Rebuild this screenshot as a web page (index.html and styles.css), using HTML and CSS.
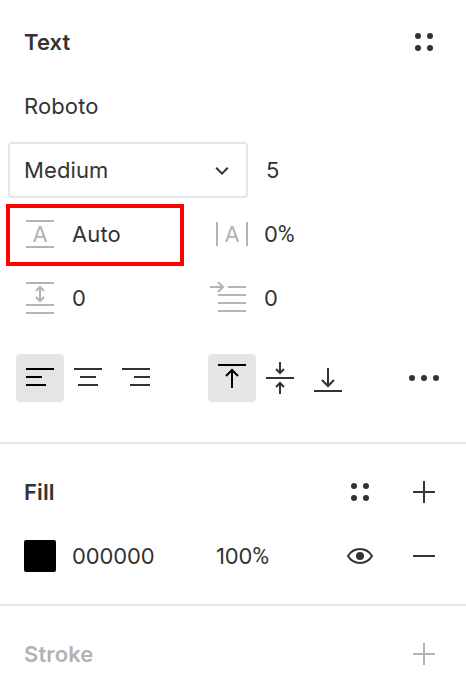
FILE: index.html
```html
<!DOCTYPE html>
<html lang="en">
<head>
    <meta charset="UTF-8">
    <meta name="viewport" content="width=device-width, initial-scale=1.0">
    <title>Text Properties Panel</title>
    <link rel="stylesheet" href="styles.css">
</head>
<body>
    <div class="panel">
        <section class="section">
            <div class="row">
                <h2 class="title">Text</h2>
                <svg class="icon push" viewBox="0 0 48 48"><g class="dots"><circle cx="18" cy="18" r="3"/><circle cx="30" cy="18" r="3"/><circle cx="18" cy="30" r="3"/><circle cx="30" cy="30" r="3"/></g></svg>
            </div>
            <div class="row">
                <span class="value">Roboto</span>
            </div>
            <div class="row">
                <div class="select">
                    <span>Medium</span>
                    <svg class="icon" viewBox="0 0 48 48"><path d="M18.2 21.8l5.8 5.8 5.8-5.8"/></svg>
                </div>
                <span class="font-size">5</span>
            </div>
            <div class="row">
                <div class="field field-highlight">
                    <svg class="icon muted" viewBox="0 0 48 48"><path d="M10 11h28M10 37h28"/><text x="24" y="32">A</text></svg>
                    <span>Auto</span>
                </div>
                <div class="field">
                    <svg class="icon muted" viewBox="0 0 48 48"><path d="M9 12v24M39 12v24"/><text x="24" y="32">A</text></svg>
                    <span class="num">0<span class="percent">%</span></span>
                </div>
            </div>
            <div class="row">
                <div class="field">
                    <svg class="icon muted" viewBox="0 0 48 48"><path d="M10 9h28M10 31h28M10 39h28M24 13v14M20 17l4-4 4 4M20 23l4 4 4-4"/></svg>
                    <span class="num">0</span>
                </div>
                <div class="field">
                    <svg class="icon muted" viewBox="0 0 48 48"><path d="M20 13h18M10 21h28M10 29h28M10 37h28M2 13h12.5M10 8l5 5-5 5"/></svg>
                    <span class="num">0</span>
                </div>
            </div>
            <div class="row row-align">
                <div class="group">
                    <button class="btn active" aria-label="Align left"><svg class="icon" viewBox="0 0 48 48"><path d="M10 15h28M10 23h16M10 31h20"/></svg></button>
                    <button class="btn" aria-label="Align center"><svg class="icon" viewBox="0 0 48 48"><path d="M10 15h28M16 23h16M14 31h20"/></svg></button>
                    <button class="btn" aria-label="Align right"><svg class="icon" viewBox="0 0 48 48"><path d="M10 15h28M22 23h16M18 31h20"/></svg></button>
                </div>
                <div class="group">
                    <button class="btn active" aria-label="Align top"><svg class="icon" viewBox="0 0 48 48"><path d="M10 11h28M24 34V16M18 22l6-6 6 6"/></svg></button>
                    <button class="btn" aria-label="Align middle"><svg class="icon" viewBox="0 0 48 48"><path d="M10 24h28M24 8v11M20 15l4 4 4-4M24 40V29M20 33l4-4 4 4"/></svg></button>
                    <button class="btn" aria-label="Align bottom"><svg class="icon" viewBox="0 0 48 48"><path d="M10 37h28M24 14v18M18 26l6 6 6-6"/></svg></button>
                </div>
                <button class="btn push" aria-label="More"><svg class="icon" viewBox="0 0 48 48"><g class="dots"><circle cx="12" cy="24" r="3"/><circle cx="24" cy="24" r="3"/><circle cx="36" cy="24" r="3"/></g></svg></button>
            </div>
        </section>

        <section class="section section-fill">
            <div class="row">
                <h2 class="title">Fill</h2>
                <div class="actions">
                    <svg class="icon" viewBox="0 0 48 48"><g class="dots"><circle cx="18" cy="18" r="3"/><circle cx="30" cy="18" r="3"/><circle cx="18" cy="30" r="3"/><circle cx="30" cy="30" r="3"/></g></svg>
                    <svg class="icon" viewBox="0 0 48 48"><path d="M13 24h22M24 13v22"/></svg>
                </div>
            </div>
            <div class="row">
                <span class="swatch"></span>
                <span class="num hex">000000</span>
                <span class="num">100<span class="percent">%</span></span>
                <div class="actions">
                    <svg class="icon" viewBox="0 0 48 48"><path d="M12 24C15 19 19 17 24 17S33 19 36 24C33 29 29 31 24 31S15 29 12 24Z"/><g class="dots"><circle cx="24" cy="24" r="4"/></g></svg>
                    <svg class="icon" viewBox="0 0 48 48"><path d="M13 24h22"/></svg>
                </div>
            </div>
        </section>

        <section class="section section-stroke">
            <div class="row">
                <h2 class="title">Stroke</h2>
                <svg class="icon push" viewBox="0 0 48 48"><path d="M13 24h22M24 13v22"/></svg>
            </div>
        </section>
    </div>
</body>
</html>
```
FILE: styles.css
```css
:root {
    --text: #333;
    --muted: #b3b3b3;
    --line: #e5e5e5;
    --highlight: #f00;
}

* {
    margin: 0;
    padding: 0;
    box-sizing: border-box;
}

body {
    font-family: Inter, sans-serif;
    font-size: 22px;
    line-height: 32px;
    letter-spacing: 0.11px;
    color: var(--text);
    background: #fff;
}

.panel {
    height: 678px;
    overflow: hidden;
}

/* Sections */
.section {
    padding-top: 10px;
    border-bottom: 2px solid var(--line);
}

.section-fill {
    padding: 16px 0;
}

.section-stroke {
    padding-top: 16px;
    border-bottom: none;
    color: var(--muted);
}

.row {
    display: flex;
    align-items: center;
    height: 64px;
    padding: 0 18px 0 16px;
}

.row-align {
    height: 112px;
    padding-bottom: 16px;
}

.title {
    padding-left: 8px;
    font-size: 22px;
    font-weight: 600;
}

.value {
    padding-left: 8px;
}

.num {
    letter-spacing: -0.15px;
}

.percent {
    font-family: Roboto, sans-serif;
    font-size: 23px;
    line-height: 1;
}

.push {
    margin-left: auto;
}

/* Icons */
.icon {
    display: block;
    flex: none;
    width: 48px;
    height: 48px;
    fill: none;
    stroke: currentColor;
    stroke-width: 2;
}

.icon text,
.icon .dots {
    fill: currentColor;
    stroke: none;
}

.icon text {
    font-size: 22px;
    letter-spacing: 0;
    text-anchor: middle;
}

.muted {
    color: var(--muted);
}

/* Fields */
.select {
    display: flex;
    align-items: center;
    justify-content: space-between;
    width: 240px;
    height: 56px;
    margin-left: -8px;
    padding-left: 14px;
    border: 2px solid var(--line);
    border-radius: 4px;
}

.font-size {
    padding-left: 18px;
}

.field {
    display: flex;
    align-items: center;
    gap: 8px;
    width: 192px;
}

.field-highlight {
    position: relative;
}

.field-highlight::after {
    content: '';
    position: absolute;
    top: -6px;
    left: -10px;
    box-sizing: border-box;
    width: 178px;
    height: 62px;
    border: 4px solid var(--highlight);
}

/* Alignment buttons */
.group {
    display: flex;
    width: 192px;
}

.btn {
    width: 48px;
    height: 48px;
    border: none;
    border-radius: 4px;
    background: none;
    color: inherit;
}

.btn.active {
    background: var(--line);
    color: #000;
}

/* Fill */
.swatch {
    width: 32px;
    height: 32px;
    margin: 0 16px 0 8px;
    border-radius: 2px;
    background: #000;
}

.hex {
    width: 144px;
}

.actions {
    display: flex;
    gap: 16px;
    margin-left: auto;
}
```
